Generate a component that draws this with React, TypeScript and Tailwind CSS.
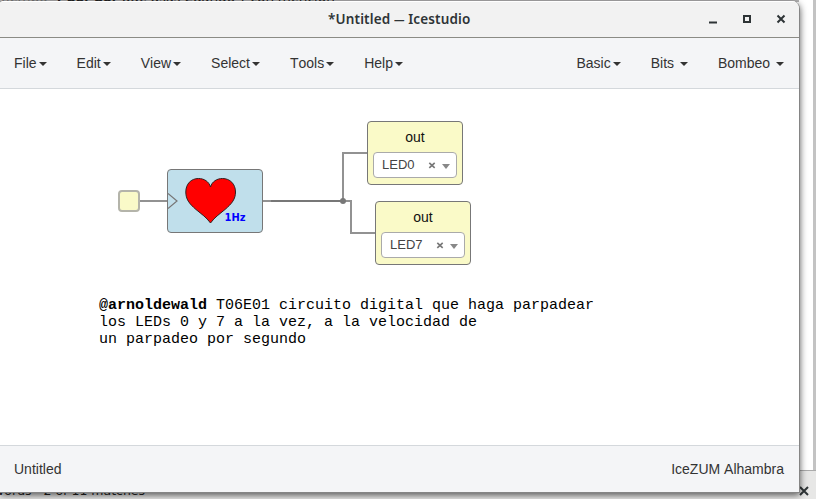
import React from "react";

const leftMenus = ["File", "Edit", "View", "Select", "Tools", "Help"];
const rightMenus = ["Basic", "Bits ", "Bombeo "];

function Menu({ label }: { label: string }) {
  return (
    <button className="flex items-center whitespace-pre leading-5">
      {label}
      <span className="ml-[2px] mt-[2px] h-0 w-0 border-x-4 border-t-4 border-x-transparent border-t-[#333]" />
    </button>
  );
}

function OutputBlock({ led, place }: { led: string; place: string }) {
  return (
    <div
      className={`absolute ${place} flex h-16 w-24 flex-col rounded-[4px] border border-[#777] bg-[#fafac8] px-[5px] pt-[5px]`}
    >
      <span className="h-[25px] text-center text-[14px] leading-5 text-[#111]">out</span>
      <div className="flex h-[26px] w-[84px] items-center rounded-[4px] border border-[#aaa] bg-white pl-2 text-[13px] text-[#444]">
        <span className="w-[46px] leading-6">{led}</span>
        <svg className="mt-px h-[7px] w-[8px]" viewBox="0 0 8 7">
          <path d="M1.300 .8L6.700 5.900M6.700 .8L1.300 5.900" stroke="#777" strokeWidth="1.6" />
        </svg>
        <span className="ml-[6px] mt-[3px] h-0 w-0 border-x-4 border-t-[5px] border-x-transparent border-t-[#888]" />
      </div>
    </div>
  );
}

export default function App() {
  return (
    <div className="relative h-[499px] w-[816px] overflow-hidden bg-white font-['Liberation_Sans',Arial,sans-serif] text-[14px] text-[#333] [font-kerning:none]">
      <div className="flex h-[499px] flex-col">
        <div className="flex min-h-0 flex-1 justify-end">
          <div className="h-full w-[3px] bg-[#c3c3c3]" />
        </div>
        <div className="flex h-[29px] items-end justify-end border-t border-[#aaa] bg-[#e7e7e6] pb-[3px] pr-[7px]">
          <svg className="h-[10px] w-[10px]" viewBox="0 0 10 10">
            <path d="M1 1L9 9M9 1L1 9" stroke="#303638" strokeWidth="2" />
          </svg>
        </div>
      </div>
      <div className="absolute left-0 top-0 h-[2px] w-[799px] overflow-hidden bg-[#b5b4b5] font-['Noto_Sans',sans-serif] text-[14px] leading-5 text-[#222]">
        <div className="-mt-[13px] whitespace-pre pl-[1px]">
          <span className="text-[#777]">tiempo</span>{"  "}<b>T por por</b> que usas Cuando T con mención
        </div>
      </div>
      <div className="absolute left-0 top-[481px] whitespace-pre font-['DejaVu_Sans',sans-serif] text-[12.5px] leading-5 text-[#222]">
        <div className="-ml-[8px]">Words   2 of 11 matches</div>
      </div>

      <div className="absolute left-0 top-px flex h-[492px] w-[800px] flex-col overflow-hidden rounded-tl-[4px] rounded-tr-[8px] border-b border-r border-[#858585] bg-white shadow-[0_2px_7px_rgba(0,0,0,0.65)]">
        <header className="flex h-[37px] shrink-0 items-center border-b border-[#8b8b85] border-t border-t-white bg-[#f2f2f2]">
          <span className="-mt-[2px] ml-[328px] flex w-[380px] items-center whitespace-pre font-['Noto_Sans',sans-serif] text-[13.5px] font-semibold leading-5 tracking-[0.15px] text-[#2e3436]">
            *Untitled <span className="inline-block w-[10.5px] origin-left scale-x-[.78]">—</span> Icestudio
          </span>
          <svg className="h-[11px] w-[79px]" viewBox="0 0 79 11">
            <path d="M1 8.500h8" stroke="#2e3436" strokeWidth="2" />
            <path d="M36 2h6v6h-6z" fill="none" stroke="#2e3436" strokeWidth="2" />
            <path d="M69.500 1.500l7 7M76.500 1.500l-7 7" stroke="#2e3436" strokeWidth="2" />
          </svg>
        </header>
        <nav className="flex h-[51px] shrink-0 items-center justify-between border-b border-[#d4d8dc] bg-[#f4f5f7] pl-[14px] pr-[15px]">
          <div className="flex gap-[30px]">
            {leftMenus.map((m) => <Menu key={m} label={m} />)}
          </div>
          <div className="flex gap-[30px]">
            {rightMenus.map((m) => <Menu key={m} label={m} />)}
          </div>
        </nav>
        <main className="relative min-h-0 flex-1 bg-white">
          <svg className="absolute left-0 top-0 h-[200px] w-[500px]" viewBox="0 0 500 200" fill="none">
            <path d="M139 112H167M263 112H271M343 112V64H367M343 112H351V144H376" stroke="#929292" strokeWidth="2" />
            <path d="M271 112H343" stroke="#777" strokeWidth="2" />
            <circle cx="343" cy="112" r="3" fill="#777" />
          </svg>
          <div className="absolute left-[118px] top-[101px] h-[22px] w-[22px] rounded-[4px] border-2 border-[#b4b4aa] bg-[#fafac8]" />
          <div className="absolute left-[167px] top-[80px] h-16 w-24 rounded-[4px] border border-[#777] bg-[#c0dfeb]">
            <svg className="h-[62px] w-[94px]" viewBox="168 170 94 62">
              <path d="M168 193.500L177 201L168 208.500" fill="none" stroke="#777" strokeWidth="1.2" />
              <path
                d="M210.500 223C206 217 202 214.500 196 209.500C189 203.500 185.800 199 185.800 192C185.800 184 191 178.500 198.500 178.500C204 178.500 209 181.500 210.500 187C212 181.500 217 178.500 222.500 178.500C230 178.500 235.500 184 235.500 192C235.500 199 232 203.500 225 209.500C219 214.500 215 217 210.500 223Z"
                fill="#f00" stroke="#302020" strokeWidth="1"
              />
              <text x="224.500" y="221" className="fill-[#00f] font-['DejaVu_Sans_Condensed','DejaVu_Sans',sans-serif] text-[11px] font-bold" textLength="21" lengthAdjust="spacingAndGlyphs">1Hz</text>
            </svg>
          </div>
          <OutputBlock led="LED0" place="left-[367px] top-[32px]" />
          <OutputBlock led="LED7" place="left-[375px] top-[112px]" />
          <p className="absolute left-[99px] top-[208px] whitespace-pre font-['Liberation_Mono',monospace] text-[15px] leading-[17px] text-black">
            <b>@arnoldewald</b> T06E01 circuito digital que haga parpadear{"\n"}los LEDs 0 y 7 a la vez, a la velocidad de{"\n"}un parpadeo por segundo
          </p>
        </main>
        <footer className="flex h-[47px] shrink-0 items-center justify-between border-t border-[#d4d8dc] bg-[#f4f5f7] pl-[14px] pr-[15px]">
          <span>Untitled</span>
          <span>IceZUM Alhambra</span>
        </footer>
      </div>
    </div>
  );
}
